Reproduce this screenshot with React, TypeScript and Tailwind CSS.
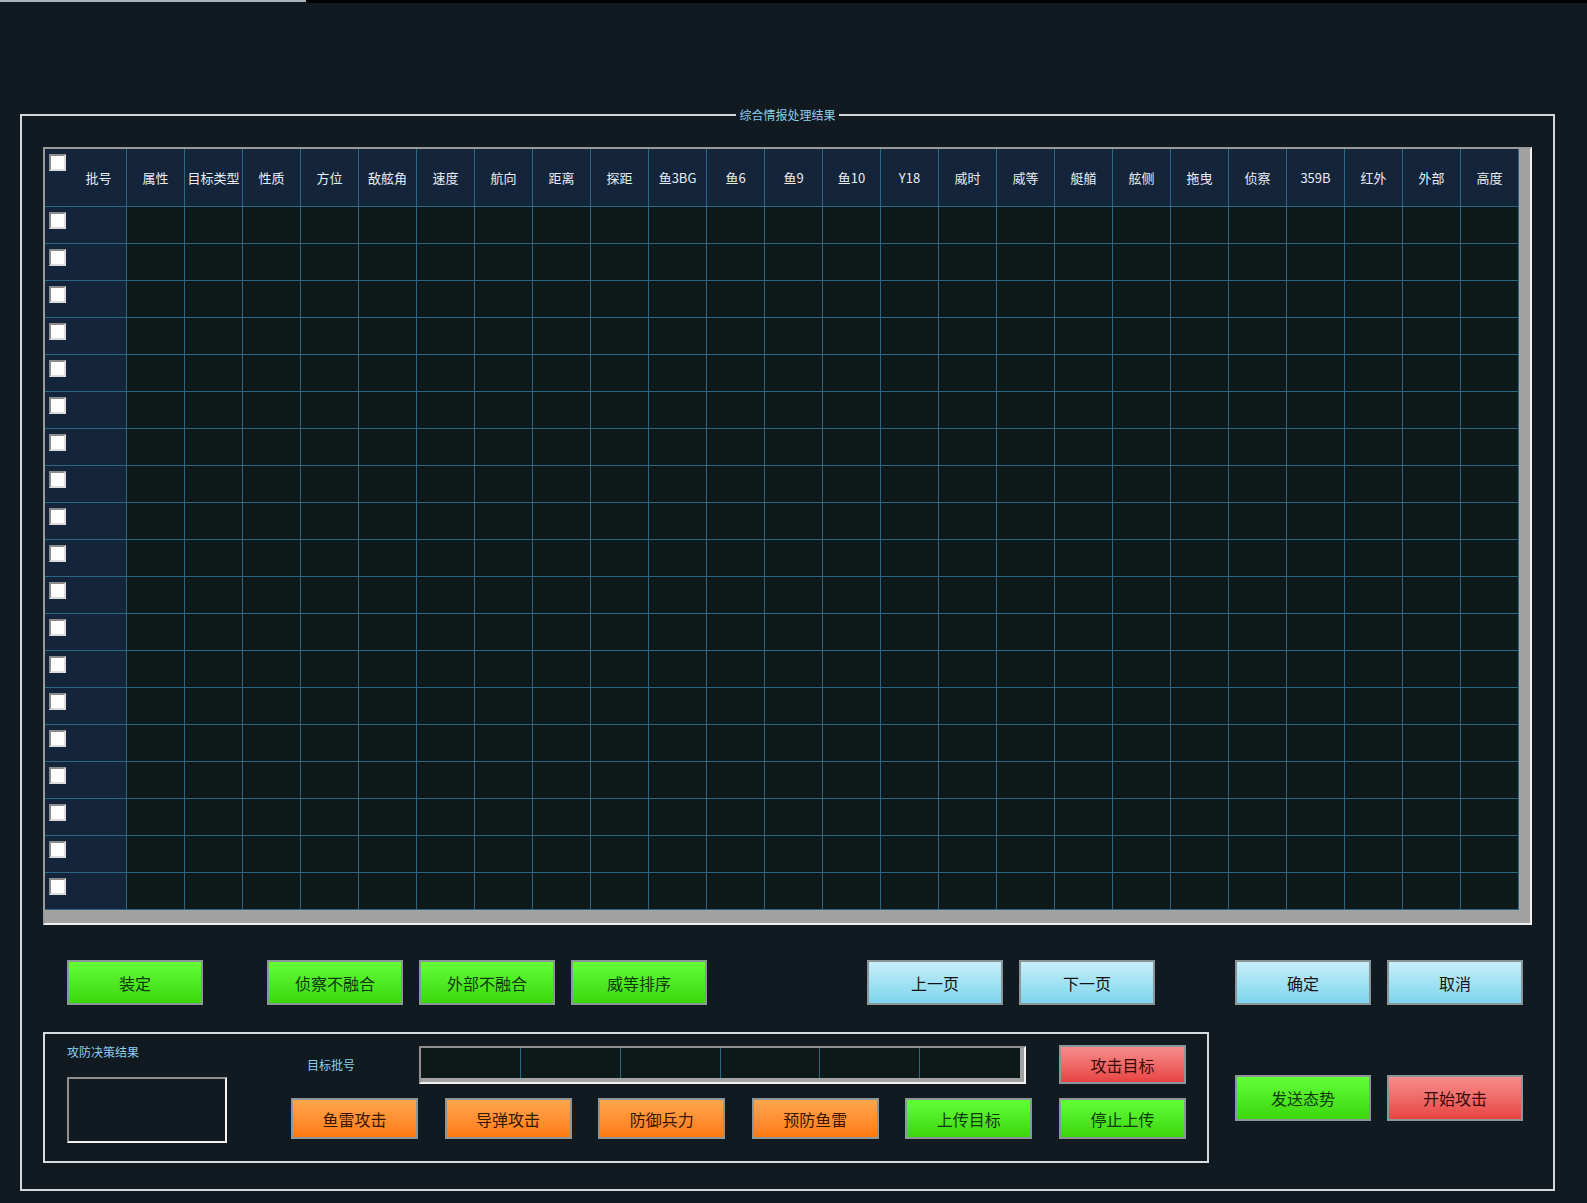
import React from "react";

const FONT = { fontFamily: '"Noto Sans CJK SC", "Noto Sans", sans-serif' };

const headers = [
  "批号", "属性", "目标类型", "性质", "方位", "敌舷角", "速度", "航向", "距离", "探距",
  "鱼3BG", "鱼6", "鱼9", "鱼10", "Y18", "威时", "威等", "艇艏", "舷侧", "拖曳",
  "侦察", "359B", "红外", "外部", "高度",
];

function Check() {
  return (
    <span className="block w-[17px] h-[17px] bg-white border-2 border-t-[#8c8c8c] border-l-[#8c8c8c] border-b-[#dcdcdc] border-r-[#dcdcdc]" />
  );
}

type Kind = "green" | "cyan" | "orange" | "red";
const kindCls: Record<Kind, string> = {
  green: "bg-linear-to-b from-[#62ff36] to-[#3cd60a] text-[#0d3a0d]",
  cyan: "bg-linear-to-b from-[#c6eff9] to-[#7cd5ee] text-[#141414]",
  orange: "bg-linear-to-b from-[#ffa64c] to-[#ff7a0e] text-[#3a1500]",
  red: "bg-linear-to-b from-[#f58c8c] to-[#e74242] text-[#3a0a0a]",
};

function Btn({ kind, label, cls }: { kind: Kind; label: string; cls: string }) {
  return (
    <div
      className={`flex items-center justify-center border-2 border-[#8c9598] text-[16px] ${kindCls[kind]} ${cls}`}
    >
      {label}
    </div>
  );
}

export default function App() {
  const rows = Array.from({ length: 19 });
  return (
    <div className="w-[1587px] h-[1203px] bg-[#111921] overflow-hidden" style={FONT}>
      {/* top strip */}
      <div className="flex h-[3px]">
        <div className="w-[306px] border-t-2 border-[#aab3bc]" />
        <div className="flex-1 bg-black" />
      </div>

      {/* outer frame */}
      <div className="relative mt-[111px] ml-[20px] w-[1535px] h-[1077px] border-2 border-[#d3d7db] flex flex-col">
        <div className="absolute left-0 right-0 -top-[10px] flex justify-center">
          <span className="bg-[#111921] px-[3px] text-[12px] leading-[18px] text-[#8ecfe8]">综合情报处理结果</span>
        </div>

        {/* table */}
        <div className="mt-[31px] ml-[21px] w-[1489px] border-2 border-t-[#9a9a9a] border-l-[#9a9a9a] border-b-[#f0f0f0] border-r-[#f0f0f0] flex flex-col">
          <div className="flex">
            <div className="grid grid-cols-[82px_repeat(24,58px)]">
              {headers.map((h, i) =>
                i === 0 ? (
                  <div key={h} className="h-[58px] bg-[#13243b] border-r border-b border-[#2b6684] flex pl-[4px] pt-[5px]">
                    <Check />
                    <div className="flex-1 flex items-center justify-center pl-[5px] -mt-[5px] text-[13px] text-[#e8eef4]">{h}</div>
                  </div>
                ) : (
                  <div key={h} className="h-[58px] bg-[#13243b] border-r border-b border-[#2b6684] flex items-center justify-center text-[13px] text-[#e8eef4] whitespace-nowrap">
                    {h}
                  </div>
                )
              )}
              {rows.map((_, r) =>
                headers.map((h, c) =>
                  c === 0 ? (
                    <div key={`${r}-${c}`} className="h-[37px] bg-[#13243b] border-r border-b border-[#2b6684] pl-[4px] pt-[5px]">
                      <Check />
                    </div>
                  ) : (
                    <div key={`${r}-${c}`} className="h-[37px] bg-[#0e1a1a] border-r border-b border-[#2b6684]" />
                  )
                )
              )}
            </div>
            <div className="w-[11px] bg-[#a2a2a2]" />
          </div>
          <div className="h-[13px] bg-[#a2a2a2]" />
        </div>

        {/* button row */}
        <div className="mt-[35px] ml-[45px] flex">
          <Btn kind="green" label="装定" cls="w-[136px] h-[45px]" />
          <Btn kind="green" label="侦察不融合" cls="w-[136px] h-[45px] ml-[64px]" />
          <Btn kind="green" label="外部不融合" cls="w-[136px] h-[45px] ml-[16px]" />
          <Btn kind="green" label="威等排序" cls="w-[136px] h-[45px] ml-[16px]" />
          <Btn kind="cyan" label="上一页" cls="w-[136px] h-[45px] ml-[160px]" />
          <Btn kind="cyan" label="下一页" cls="w-[136px] h-[45px] ml-[16px]" />
          <Btn kind="cyan" label="确定" cls="w-[136px] h-[45px] ml-[80px]" />
          <Btn kind="cyan" label="取消" cls="w-[136px] h-[45px] ml-[16px]" />
        </div>

        {/* bottom row */}
        <div className="mt-[27px] ml-[21px] flex items-center">
          <div className="w-[1166px] h-[131px] border-2 border-[#d8dcdf] flex">
            <div className="ml-[22px] pt-[9px] flex flex-col">
              <span className="text-[12px] leading-[18px] text-[#8ecfe8]">攻防决策结果</span>
              <div className="mt-[16px] w-[160px] h-[66px] border-2 border-t-[#8f8f8f] border-l-[#8f8f8f] border-b-[#f2f2f2] border-r-[#f2f2f2]" />
            </div>
            <div className="ml-[64px] pt-[11px] w-[895px] flex flex-col">
              <div className="flex items-center h-[39px]">
                <span className="ml-[16px] w-[48px] text-[12px] leading-[18px] text-[#8ecfe8] whitespace-nowrap">目标批号</span>
                <div className="ml-[64px] w-[607px] h-[38px] border-2 border-t-[#8f8f8f] border-l-[#8f8f8f] border-b-[#f2f2f2] border-r-[#f2f2f2] flex flex-col">
                  <div className="flex flex-1">
                    <div className="flex-1 grid grid-cols-6 bg-[#0e1a1a]">
                      {Array.from({ length: 6 }).map((_, i) => (
                        <div key={i} className="border-r border-[#2b6684] last:border-r-0" />
                      ))}
                    </div>
                    <div className="w-[4px] bg-[#a2a2a2]" />
                  </div>
                  <div className="h-[4px] bg-[#a2a2a2]" />
                </div>
                <Btn kind="red" label="攻击目标" cls="ml-[33px] w-[127px] h-[39px]" />
              </div>
              <div className="mt-[14px] flex justify-between">
                <Btn kind="orange" label="鱼雷攻击" cls="w-[127px] h-[41px]" />
                <Btn kind="orange" label="导弹攻击" cls="w-[127px] h-[41px]" />
                <Btn kind="orange" label="防御兵力" cls="w-[127px] h-[41px]" />
                <Btn kind="orange" label="预防鱼雷" cls="w-[127px] h-[41px]" />
                <Btn kind="green" label="上传目标" cls="w-[127px] h-[41px]" />
                <Btn kind="green" label="停止上传" cls="w-[127px] h-[41px]" />
              </div>
            </div>
          </div>
          <Btn kind="green" label="发送态势" cls="ml-[26px] w-[136px] h-[46px]" />
          <Btn kind="red" label="开始攻击" cls="ml-[16px] w-[136px] h-[46px]" />
        </div>
      </div>
    </div>
  );
}
